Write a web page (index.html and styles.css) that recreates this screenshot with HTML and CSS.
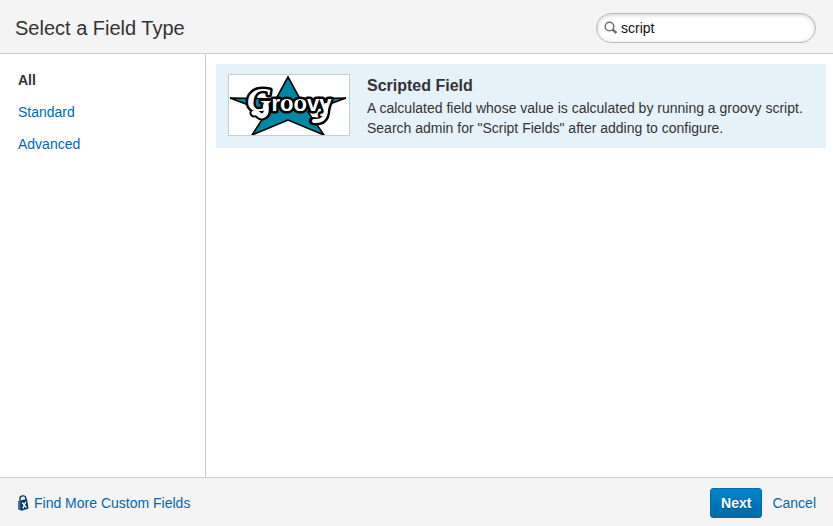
FILE: index.html
```html
<!DOCTYPE html>
<html lang="en">
<head>
    <meta charset="UTF-8">
    <meta name="viewport" content="width=device-width, initial-scale=1.0">
    <title>Select a Field Type</title>
    <link rel="stylesheet" href="styles.css">
</head>
<body>

<form class="dialog">
    <!-- Header -->
    <header class="dialog-header">
        <h1>Select a Field Type</h1>
        <label class="search">
            <svg class="search-icon" width="14" height="14" viewBox="0 0 14 14" aria-hidden="true">
                <circle cx="5.5" cy="5.5" r="4.3" fill="none" stroke="#707070" stroke-width="1.5"/>
                <path d="M8.5 8.5L12.5 12" stroke="#707070" stroke-width="2.4"/>
            </svg>
            <input type="text" value="script" aria-label="Search">
        </label>
    </header>

    <div class="dialog-body">
        <!-- Categories -->
        <nav class="sidebar">
            <a href="#all" class="selected">All</a>
            <a href="#standard">Standard</a>
            <a href="#advanced">Advanced</a>
        </nav>

        <!-- Field types -->
        <main class="content">
            <div class="field-type">
                <svg class="field-image" width="122" height="62" viewBox="0 0 120 60" role="img" aria-label="Groovy">
                    <path d="M59 2L71 24L117 23L79 37L95 60L59 45L23 60L38 37L1 23L47 24Z" fill="#0087a2" stroke="#000" stroke-width="1.6"/>
                    <!-- Black outline of the tails -->
                    <path d="M25 38C29 36 29 41 33 41C38 40 39 36 38 31" fill="none" stroke="#000" stroke-width="9" stroke-linecap="round"/>
                    <path d="M97 28C99 43 94 48 84 46" fill="none" stroke="#000" stroke-width="8" stroke-linecap="round"/>
                    <text class="logo-letters" x="18" y="36"><tspan class="logo-big">G</tspan>roovy</text>
                    <path d="M25 38C29 36 29 41 33 41C37 40 38 37 37 31" fill="none" stroke="#fff" stroke-width="5" stroke-linecap="round"/>
                    <path d="M97 30C98 42 94 47 85 46" fill="none" stroke="#fff" stroke-width="4" stroke-linecap="round"/>
                    <!-- Pupils -->
                    <ellipse cx="58" cy="28" rx="2" ry="3"/>
                    <ellipse cx="71" cy="28" rx="2" ry="3"/>
                </svg>
                <div class="field-text">
                    <h2>Scripted Field</h2>
                    <p>A calculated field whose value is calculated by running a groovy script. Search admin for "Script Fields" after adding to configure.</p>
                </div>
            </div>
        </main>
    </div>

    <!-- Footer -->
    <footer class="dialog-footer">
        <a href="#more" class="find-more">
            <svg width="12" height="16" viewBox="0 0 12 16" aria-hidden="true">
                <path d="M3 5.5V3.5C3 .3 8.5 0 8.8 3V4.5" fill="none" stroke="#003366" stroke-width="1.4"/>
                <path d="M1 6L10 4L11.5 13.5L4.5 15.8L1 14Z" fill="#003366"/>
                <path d="M1 6L3.5 6.5V15L1 14Z" fill="#3b73af"/>
                <path d="M5.2 7.5L9.3 12.5M8.8 6.8L5.8 13.5" stroke="#fff" stroke-width="1.4"/>
            </svg>
            Find More Custom Fields
        </a>
        <button type="submit">Next</button>
        <a href="#cancel">Cancel</a>
    </footer>
</form>

</body>
</html>
```
FILE: styles.css
```css
body {
    margin: 0;
    font-family: "Liberation Sans", Arial, sans-serif;
    font-size: 14px;
    line-height: 20px;
    color: #333;
    background-color: #fff;
}

a {
    color: #0068b0;
    text-decoration: none;
}

a:hover {
    text-decoration: underline;
}

.dialog {
    display: flex;
    flex-direction: column;
    min-height: 100vh;
}

/* Header */
.dialog-header {
    display: flex;
    align-items: center;
    justify-content: space-between;
    padding: 13px 17px 10px 15px;
    background-color: #f4f4f4;
    border-bottom: 1px solid #ccc;
}

h1 {
    margin: 0;
    font-size: 20px;
    font-weight: normal;
    line-height: 30px;
}

.search {
    display: flex;
    align-items: center;
    box-sizing: border-box;
    width: 220px;
    height: 30px;
    padding: 0 7px;
    background-color: #fff;
    border: 1px solid #bbb;
    border-radius: 15px;
    box-shadow: inset 0 1px 4px #ccc;
}

.search-icon {
    flex: none;
}

.search input {
    flex: 1;
    min-width: 0;
    padding: 0 3px;
    font: inherit;
    color: #111;
    background: none;
    border: none;
    outline: none;
}

/* Body */
.dialog-body {
    display: flex;
    flex: 1;
}

.sidebar {
    display: flex;
    flex-direction: column;
    gap: 12px;
    box-sizing: border-box;
    flex: 0 0 206px;
    padding: 16px 18px;
    border-right: 1px solid #ccc;
}

.sidebar .selected {
    font-weight: bold;
    color: #333;
}

.content {
    flex: 1;
    padding: 10px 7px 10px 10px;
}

.field-type {
    display: flex;
    align-items: flex-start;
    gap: 17px;
    padding: 10px 12px;
    background-color: #e6f2f9;
}

.field-image {
    flex: none;
    box-sizing: border-box;
    background-color: #fff;
    border: 1px solid #ccc;
}

.logo-letters {
    font-family: "Liberation Sans", Arial, sans-serif;
    font-size: 22px;
    font-weight: bold;
    fill: #fff;
    stroke: #000;
    stroke-width: 5px;
    stroke-linejoin: round;
    paint-order: stroke;
}

.logo-big {
    font-family: "Liberation Serif", serif;
    font-size: 34px;
    font-style: italic;
}

.field-text h2 {
    margin: 0;
    font-size: 16px;
    line-height: 24px;
}

.field-text p {
    margin: 0;
}

/* Footer */
.dialog-footer {
    display: flex;
    align-items: center;
    gap: 10px;
    padding: 10px 17px 8px;
    background-color: #f4f4f4;
    border-top: 1px solid #ccc;
}

.find-more {
    display: flex;
    align-items: center;
    gap: 5px;
    margin-right: auto;
}

button {
    height: 30px;
    padding: 0 10px;
    font: inherit;
    font-weight: bold;
    color: #fff;
    background: linear-gradient(#0084cc, #006aaa);
    border: 1px solid #0069a6;
    border-radius: 3px;
    text-shadow: 0 1px 0 #004d7a;
    cursor: pointer;
}
```
